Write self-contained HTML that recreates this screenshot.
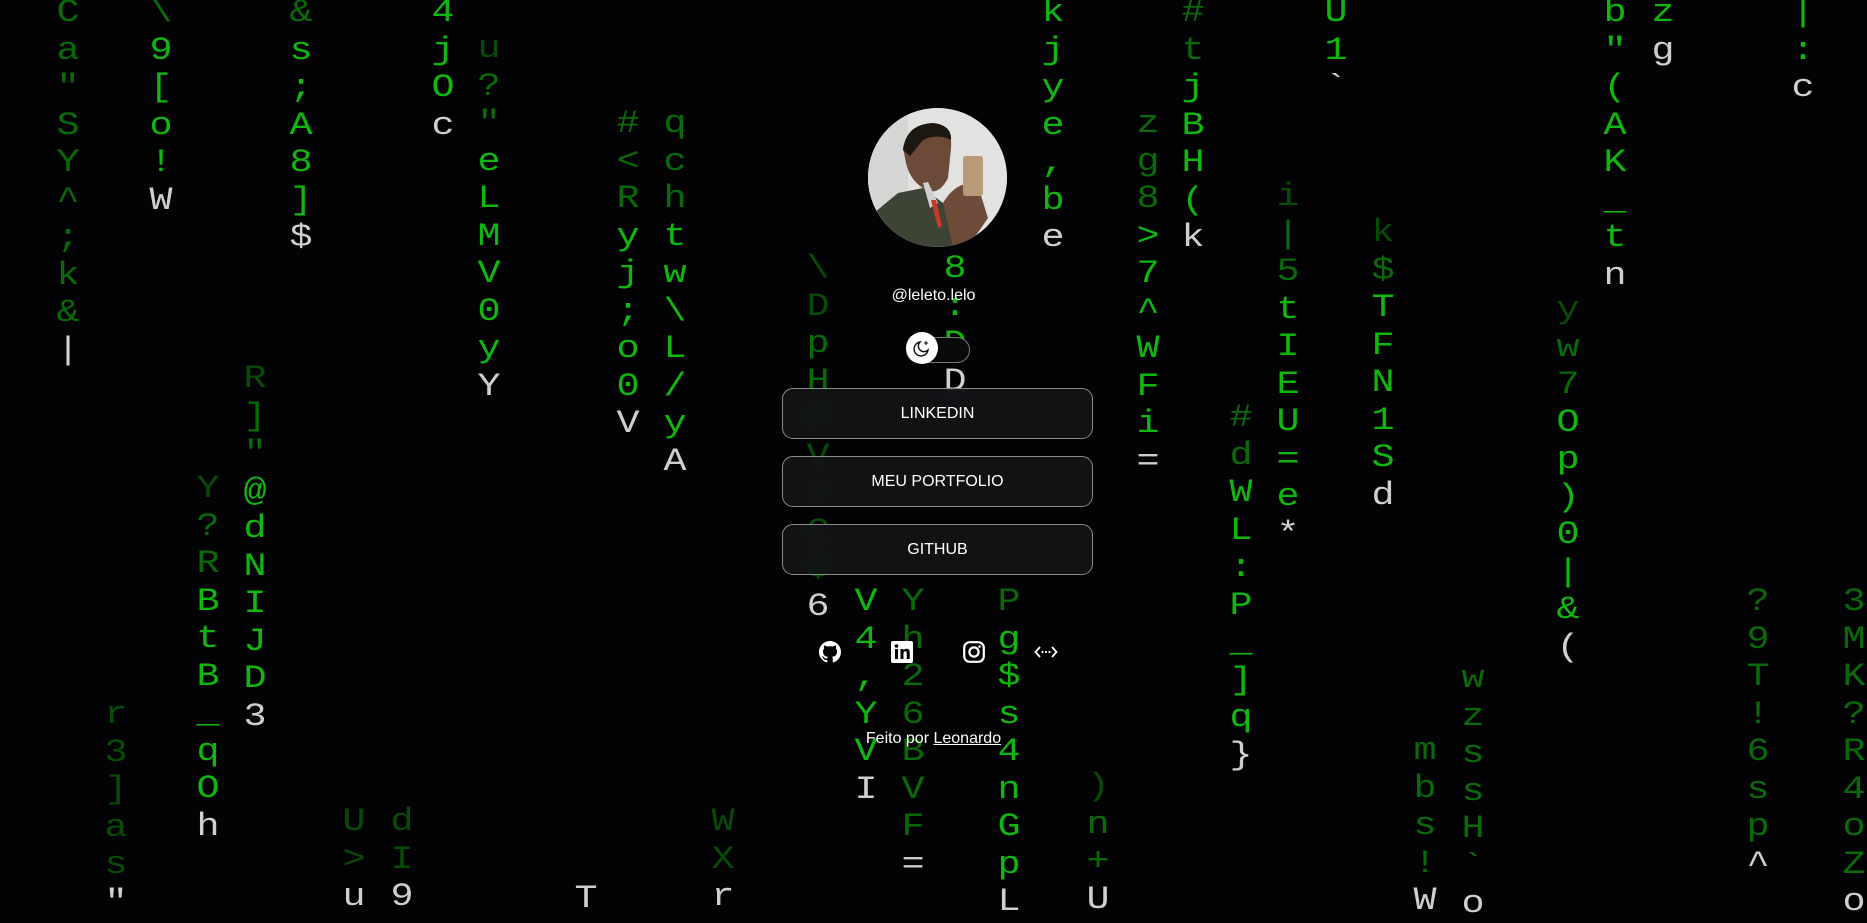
<!DOCTYPE html>
<html><head><meta charset="utf-8">
<style>
html,body{margin:0;padding:0;width:1867px;height:921px;overflow:hidden;background:#030305;font-family:"Liberation Sans",sans-serif;}
.c{position:absolute;font-family:"Liberation Mono",monospace;font-size:32px;line-height:37.5px;color:#0fb80f;white-space:pre;width:30px;text-align:center;transform:scaleX(1.2);transform-origin:left top;}
.c b{display:block;font-weight:normal;}
.c b:last-child{color:#cfcfcf;}
.d{color:#0a6a0a;}
.dd{color:#084a08;}
.av{position:absolute;left:868px;top:108px;width:139px;height:139px;border-radius:50%;overflow:hidden;background:#e4e4e2;}
.user{position:absolute;left:0;width:1867px;top:287px;text-align:center;color:#fff;font-size:16px;}
.tog{position:absolute;left:906px;top:337px;width:62px;height:24px;border:1px solid #777;border-radius:13px;background:#0a0a0a;}
.knob{position:absolute;left:906px;top:332px;width:32px;height:32px;border-radius:50%;background:#fff;}
.btn{position:absolute;left:782px;width:309px;height:49px;border:1px solid #8a8a8a;border-radius:11px;background:rgba(22,22,26,.82);backdrop-filter:blur(6px);color:#fff;font-size:16px;text-align:center;line-height:49px;}
.foot{position:absolute;left:0;width:1867px;top:730px;text-align:center;color:#fff;font-size:16px;}
.foot u{text-decoration:underline;}
.ic{position:absolute;top:641px;}
</style></head><body>
<div class="c d" style="left:50px;top:-6px"><b>C</b><b>a</b><b>"</b><b>S</b><b>Y</b><b>^</b><b>;</b><b>k</b><b>&amp;</b><b>|</b></div>
<div class="c" style="left:143px;top:-6px"><b class="d">\</b><b>9</b><b>[</b><b>o</b><b>!</b><b>W</b></div>
<div class="c" style="left:283px;top:-6px"><b class="d">&amp;</b><b>s</b><b>;</b><b>A</b><b>8</b><b>]</b><b>$</b></div>
<div class="c" style="left:425px;top:-6px"><b>4</b><b>j</b><b>O</b><b>c</b></div>
<div class="c" style="left:471px;top:30px"><b class="dd">u</b><b class="d">?</b><b class="d">"</b><b>e</b><b>L</b><b>M</b><b>V</b><b>0</b><b>y</b><b>Y</b></div>
<div class="c" style="left:610px;top:105px"><b class="d">#</b><b class="d">&lt;</b><b class="d">R</b><b>y</b><b>j</b><b>;</b><b>o</b><b>0</b><b>V</b></div>
<div class="c" style="left:657px;top:105px"><b class="d">q</b><b class="d">c</b><b class="d">h</b><b>t</b><b>w</b><b>\</b><b>L</b><b>/</b><b>y</b><b>A</b></div>
<div class="c dd" style="left:800px;top:250px"><b>\</b><b>D</b><b class="d">p</b><b class="d">H</b><b>P</b><b>V</b><b>=</b><b>C</b><b>$</b><b>6</b></div>
<div class="c" style="left:848px;top:583px"><b>V</b><b>4</b><b>,</b><b>Y</b><b>V</b><b>I</b></div>
<div class="c d" style="left:895px;top:583px"><b>Y</b><b>h</b><b>2</b><b>6</b><b>B</b><b>V</b><b>F</b><b>=</b></div>
<div class="c" style="left:937px;top:250px"><b>8</b><b>:</b><b>D</b><b class="dd">D</b></div>
<div class="c" style="left:991px;top:583px"><b class="d">P</b><b>g</b><b>$</b><b>s</b><b>4</b><b>n</b><b>G</b><b>p</b><b>L</b></div>
<div class="c" style="left:1035px;top:-6px"><b>k</b><b>j</b><b>y</b><b>e</b><b>,</b><b>b</b><b>e</b></div>
<div class="c d" style="left:1080px;top:768px"><b class="dd">)</b><b>n</b><b>+</b><b>U</b></div>
<div class="c" style="left:1130px;top:105px"><b class="d">z</b><b class="d">g</b><b class="d">8</b><b>&gt;</b><b>7</b><b>^</b><b>W</b><b>F</b><b>i</b><b>=</b></div>
<div class="c" style="left:1175px;top:-6px"><b class="d">#</b><b class="d">t</b><b>j</b><b>B</b><b>H</b><b>(</b><b>k</b></div>
<div class="c" style="left:1223px;top:399px"><b class="d">#</b><b class="d">d</b><b>W</b><b>L</b><b>:</b><b>P</b><b>_</b><b>]</b><b>q</b><b>}</b></div>
<div class="c" style="left:1270px;top:178px"><b class="dd">i</b><b class="d">|</b><b class="d">5</b><b>t</b><b>I</b><b>E</b><b>U</b><b>=</b><b>e</b><b>*</b></div>
<div class="c" style="left:1318px;top:-6px"><b>U</b><b>1</b><b>`</b></div>
<div class="c" style="left:1365px;top:214px"><b class="dd">k</b><b class="d">$</b><b>T</b><b>F</b><b>N</b><b>1</b><b>S</b><b>d</b></div>
<div class="c d" style="left:1407px;top:732px"><b>m</b><b>b</b><b>s</b><b>!</b><b>W</b></div>
<div class="c d" style="left:1455px;top:660px"><b>w</b><b>z</b><b>s</b><b>s</b><b>H</b><b>`</b><b>o</b></div>
<div class="c" style="left:1550px;top:291px"><b class="dd">y</b><b class="d">w</b><b class="d">7</b><b>O</b><b>p</b><b>)</b><b>0</b><b>|</b><b>&amp;</b><b>(</b></div>
<div class="c" style="left:1597px;top:-6px"><b>b</b><b>"</b><b>(</b><b>A</b><b>K</b><b>_</b><b>t</b><b>n</b></div>
<div class="c" style="left:1645px;top:-6px"><b>z</b><b>g</b></div>
<div class="c d" style="left:1740px;top:583px"><b>?</b><b>9</b><b>T</b><b>!</b><b>6</b><b>s</b><b>p</b><b>^</b></div>
<div class="c" style="left:1785px;top:-6px"><b>|</b><b>:</b><b>c</b></div>
<div class="c d" style="left:1836px;top:583px"><b>3</b><b>M</b><b>K</b><b>?</b><b>R</b><b>4</b><b>o</b><b>Z</b><b>o</b></div>
<div class="c dd" style="left:98px;top:696px"><b>r</b><b>3</b><b>]</b><b>a</b><b>s</b><b>"</b></div>
<div class="c" style="left:190px;top:470px"><b class="dd">Y</b><b class="d">?</b><b class="d">R</b><b>B</b><b>t</b><b>B</b><b>_</b><b>q</b><b>O</b><b>h</b></div>
<div class="c" style="left:237px;top:360px"><b class="dd">R</b><b class="d">]</b><b class="d">"</b><b>@</b><b>d</b><b>N</b><b>I</b><b>J</b><b>D</b><b>3</b></div>
<div class="c dd" style="left:336px;top:803px"><b>U</b><b>&gt;</b><b>u</b></div>
<div class="c dd" style="left:384px;top:803px"><b>d</b><b>I</b><b>9</b></div>
<div class="c dd" style="left:568px;top:880px"><b>T</b></div>
<div class="c dd" style="left:705px;top:803px"><b>W</b><b>X</b><b>r</b></div>

<div class="av">
<svg width="139" height="139" viewBox="0 0 139 139">
<rect width="139" height="139" fill="#e2e2e0"/>
<rect x="0" y="0" width="40" height="139" fill="#d6d6d4"/>
<path d="M0 110 L30 85 L55 80 L75 95 L95 105 L110 139 L0 139Z" fill="#3d4436"/>
<path d="M35 40 Q40 18 65 16 Q85 18 83 40 L80 70 Q70 90 55 80 Q42 72 38 55Z" fill="#6b4a38"/>
<path d="M35 42 Q38 16 65 15 Q84 17 83 32 Q70 25 55 32 L42 48Z" fill="#1d1712"/>
<path d="M55 75 L62 100 L70 95 L60 74Z" fill="#cfcfcf"/>
<path d="M63 92 L70 120 L74 118 L68 92Z" fill="#c8382a"/>
<path d="M75 95 Q90 70 110 78 L120 110 L100 139 L85 139Z" fill="#6f4c3a"/>
<rect x="95" y="48" width="20" height="40" rx="3" fill="#b89a78"/>
</svg>
</div>
<div class="user">@leleto.lelo</div>
<div class="tog"></div>
<div class="knob"><svg width="32" height="32" viewBox="0 0 32 32"><path d="M14 10 A7 7 0 1 0 22 18 A5.5 5.5 0 0 1 14 10Z" fill="none" stroke="#111" stroke-width="1.4"/><path d="M20 9 v4 M18 11 h4" stroke="#111" stroke-width="1.1"/></svg></div>
<div class="btn" style="top:388px">LINKEDIN</div>
<div class="btn" style="top:456px">MEU PORTFOLIO</div>
<div class="btn" style="top:524px">GITHUB</div>

<svg class="ic" style="left:819px" width="22" height="22" viewBox="0 0 16 16"><path fill="#fff" d="M8 0C3.58 0 0 3.58 0 8c0 3.540 2.29 6.530 5.470 7.590.4.07.55-.17.55-.38 0-.19-.01-.82-.01-1.490-2.010.37-2.530-.49-2.690-.94-.09-.23-.48-.94-.82-1.130-.28-.15-.68-.52-.01-.53.63-.01 1.080.58 1.230.82.72 1.210 1.870.87 2.330.66.07-.52.28-.87.51-1.070-1.780-.2-3.640-.89-3.640-3.950 0-.87.31-1.590.82-2.150-.08-.2-.36-1.020.08-2.120 0 0 .67-.21 2.200.82.64-.18 1.320-.27 2-.27.68 0 1.360.09 2 .27 1.530-1.040 2.200-.82 2.200-.82.44 1.100.16 1.920.08 2.120.51.56.82 1.270.82 2.150 0 3.070-1.870 3.750-3.650 3.950.29.25.54.73.54 1.480 0 1.070-.01 1.930-.01 2.200 0 .21.15.46.55.38A8.013 8.013 0 0016 8c0-4.420-3.580-8-8-8z"/></svg>
<svg class="ic" style="left:891px" width="22" height="22" viewBox="0 0 22 22"><rect width="22" height="22" rx="2" fill="#fff"/><rect x="4" y="8" width="3" height="10" fill="#000"/><circle cx="5.5" cy="5" r="1.8" fill="#000"/><path d="M9.5 8h3v1.5q1-1.8 3.2-1.8 3 0 3 3.5V18h-3v-6q0-1.7-1.5-1.7t-1.7 1.7v6h-3z" fill="#000"/></svg>
<svg class="ic" style="left:963px" width="22" height="22" viewBox="0 0 22 22"><rect x="1.2" y="1.2" width="19.6" height="19.6" rx="5.5" fill="none" stroke="#fff" stroke-width="2.2"/><circle cx="11" cy="11" r="4.6" fill="none" stroke="#fff" stroke-width="2.2"/><circle cx="16.5" cy="5.5" r="1.3" fill="#fff"/></svg>
<svg class="ic" style="left:1034px" width="24" height="22" viewBox="0 0 24 22"><path d="M6 6 L1.5 11 L6 16 M18 6 L22.5 11 L18 16" fill="none" stroke="#fff" stroke-width="1.8"/><circle cx="8.5" cy="11" r="1.1" fill="#fff"/><circle cx="12" cy="11" r="1.1" fill="#fff"/><circle cx="15.5" cy="11" r="1.1" fill="#fff"/></svg>

<div class="foot">Feito por <u>Leonardo</u></div>
</body></html>
